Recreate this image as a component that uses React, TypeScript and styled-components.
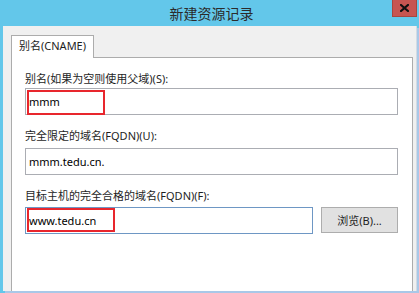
import React from "react";
import styled, { createGlobalStyle } from "styled-components";

const GlobalStyle = createGlobalStyle`
  html, body {
    margin: 0;
    padding: 0;
    background: #ffffff;
  }
  body {
    font-family: "Noto Sans", "Noto Sans CJK SC", sans-serif;
  }
`;

const fields = [
  { label: "别名(如果为空则使用父域)(S):", value: "mmm", gap: 1, mark: { left: 2, top: 2, width: 78, height: 25 } },
  { label: "完全限定的域名(FQDN)(U):", value: "mmm.tedu.cn.", gap: 4 },
];

const App = () => {
  return (
    <>
      <GlobalStyle />
      <Window>
        <TitleBar>
          <span />
          <Title>新建资源记录</Title>
          <CloseButton>
            <svg width="9" height="8" viewBox="0 0 9 8">
              <path d="M1 1 L8 7 M8 1 L1 7" stroke="#111" strokeWidth="2.2" strokeLinecap="square" />
            </svg>
          </CloseButton>
        </TitleBar>
        <Body>
          <TabStrip>
            <Tab>别名(CNAME)</Tab>
          </TabStrip>
          <Panel>
            {fields.map((f) => (
              <Field key={f.label}>
                <Label $gap={f.gap}>{f.label}</Label>
                <InputWrap>
                  <TextBox type="text" defaultValue={f.value} readOnly />
                  {f.mark && (
                    <Mark
                      style={{ left: f.mark.left, top: f.mark.top, width: f.mark.width, height: f.mark.height }}
                    />
                  )}
                </InputWrap>
              </Field>
            ))}
            <Field>
              <Label $gap={3}>目标主机的完全合格的域名(FQDN)(F):</Label>
              <Row>
                <InputWrap>
                  <TextBox type="text" defaultValue="www.tedu.cn" readOnly $focused />
                  <Mark style={{ left: 2, top: 1, width: 88, height: 24 }} />
                </InputWrap>
                <BrowseButton type="button">浏览(B)...</BrowseButton>
              </Row>
            </Field>
          </Panel>
        </Body>
      </Window>
    </>
  );
};

export default App;

const Window = styled.div`
  width: 419px;
  height: 293px;
  display: flex;
  flex-direction: column;
  box-sizing: border-box;
  background: #63c7ea;
  overflow: hidden;
`;

const TitleBar = styled.div`
  height: 26px;
  flex: none;
  display: grid;
  grid-template-columns: 1fr auto 1fr;
  align-items: start;
`;

const Title = styled.div`
  line-height: 26px;
  font-size: 14px;
  color: #2b2b2b;
  font-family: "Noto Sans CJK SC", sans-serif;
  padding-left: 4px;
`;

const CloseButton = styled.div`
  justify-self: end;
  width: 25px;
  height: 17px;
  margin-right: 2px;
  background: #c75551;
  border: 1px solid #a8463f;
  border-top: none;
  box-sizing: border-box;
  display: flex;
  align-items: center;
  justify-content: center;
`;

const Body = styled.div`
  flex: 1;
  display: flex;
  flex-direction: column;
  background: #f0f0f0;
  margin: 0 2px 2px 3px;
  padding: 9px 3px 0 8px;
  border-right: 1px solid #d4dbe3;
  box-shadow: 2px 2px 0 #a9c8e8;
`;

const TabStrip = styled.div`
  display: flex;
  height: 22px;
`;

const Tab = styled.div`
  width: 83px;
  height: 23px;
  box-sizing: border-box;
  border: 1px solid #acacac;
  border-bottom: none;
  background: #ffffff;
  font-size: 11px;
  line-height: 20px;
  padding-left: 7px;
  color: #1e1e1e;
  position: relative;
  z-index: 1;
`;

const Panel = styled.div`
  flex: 1;
  background: #ffffff;
  border: 1px solid #acacac;
  border-bottom: none;
  padding: 13px 14px 0 13px;
  display: flex;
  flex-direction: column;
  gap: 13px;
`;

const Field = styled.div`
  display: flex;
  flex-direction: column;
`;

const Label = styled.label<{ $gap: number }>`
  font-size: 11px;
  line-height: 16px;
  color: #1e1e1e;
  margin-bottom: ${(p) => p.$gap}px;
`;

const Row = styled.div`
  display: flex;
  gap: 8px;
`;

const InputWrap = styled.div`
  position: relative;
  flex: 1;
  display: flex;
`;

const TextBox = styled.input<{ $focused?: boolean }>`
  flex: 1;
  min-width: 0;
  height: 27px;
  box-sizing: border-box;
  border: 1px solid ${(p) => (p.$focused ? "#6e97c4" : "#abadb3")};
  padding: 0 2px 0 3px;
  font-family: "Noto Sans", "Noto Sans CJK SC", sans-serif;
  font-size: 11px;
  color: #000000;
  background: #ffffff;
  outline: none;
`;

const Mark = styled.div`
  position: absolute;
  box-sizing: border-box;
  border: 2px solid #e8262d;
  pointer-events: none;
`;

const BrowseButton = styled.button`
  width: 77px;
  height: 26px;
  box-sizing: border-box;
  border: 1px solid #adadad;
  background: #e1e1e1;
  font-family: "Noto Sans", "Noto Sans CJK SC", sans-serif;
  font-size: 11px;
  color: #1e1e1e;
  padding: 0;
`;
